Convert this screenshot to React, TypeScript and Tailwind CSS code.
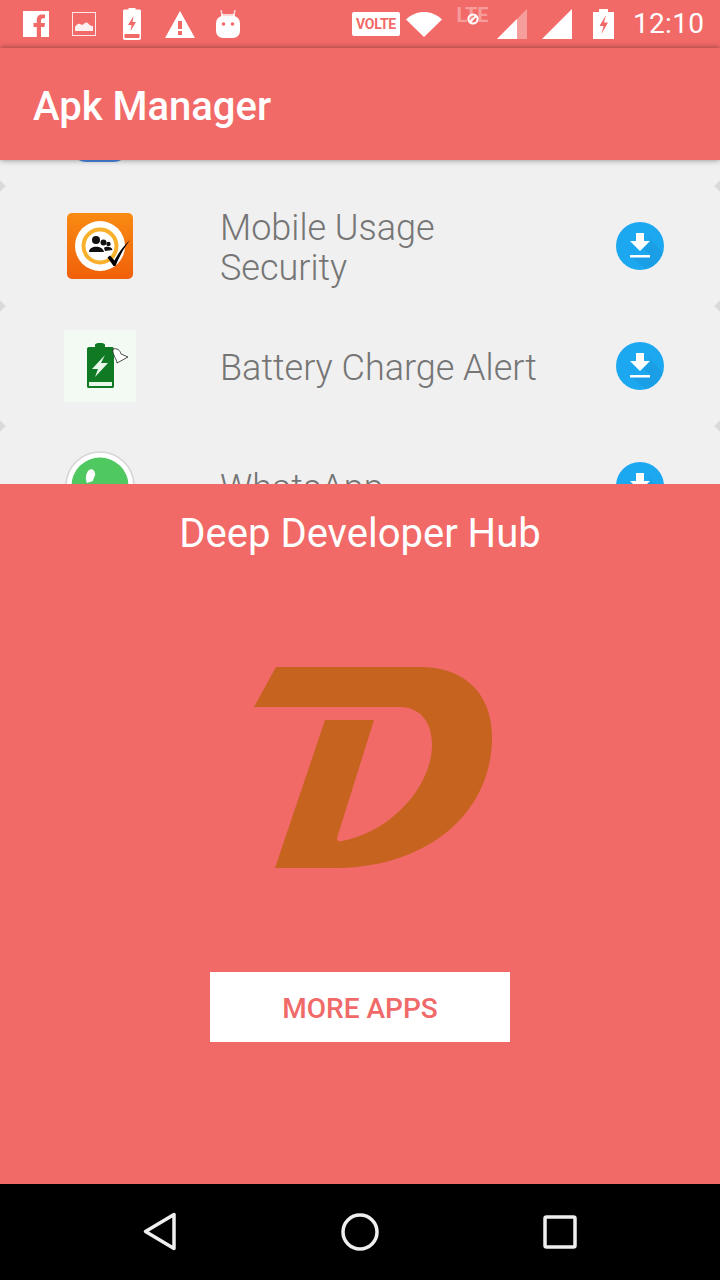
import React from 'react';

const FONT = "font-['Roboto','Liberation_Sans',sans-serif]";

function StatusBar() {
  return (
    <div className="flex h-12 shrink-0 items-center bg-[#f26a68] text-white">
      {/* facebook */}
      <svg className="ml-[23px]" width="26" height="26" viewBox="0 0 26 26">
        <path fill="#fff" d="M0 0H26V26H18V16H21.5L22 12H18V9.5C18 8 18.6 7.3 20 7.3H22V3.6C21 3.5 20 3.4 19 3.4C15.8 3.4 13.8 5.4 13.8 9V12H10.5V16H13.8V26H0Z" />
      </svg>
      {/* picture */}
      <svg className="ml-[23px]" width="24" height="24" viewBox="0 0 24 24">
        <rect x="0.5" y="0.5" width="23" height="23" fill="none" stroke="#fff" strokeOpacity="0.85" />
        <path fill="#fff" fillOpacity="0.9" d="M3 19V15C5 12 7 11 9 12.5C11 14 12 11 14 10.5C16 10 17 14 21 14V19Z" />
      </svg>
      {/* battery with bolt */}
      <svg className="ml-[27px]" width="18" height="32" viewBox="0 0 18 32">
        <path fill="#fff" d="M5.5 0H12.5V1.5H16.5C17.4 1.5 18 2.2 18 3V30C18 31.2 17.2 32 16 32H2C0.8 32 0 31.2 0 30V3C0 2.2 0.6 1.5 1.5 1.5H5.5Z" />
        <rect x="1.5" y="26" width="15" height="4" fill="#f26a68" />
        <path fill="#f26a68" d="M10.5 8L5 17H8.5L7.5 23L13 14H9.5Z" />
      </svg>
      {/* warning */}
      <svg className="ml-[24px]" width="30" height="27" viewBox="0 0 30 27">
        <path fill="#fff" d="M15 0L30 27H0Z" />
        <rect x="13" y="10" width="4" height="8" fill="#f26a68" />
        <rect x="13" y="20" width="4" height="4" fill="#f26a68" />
      </svg>
      {/* android */}
      <svg className="ml-[21px]" width="24" height="28" viewBox="0 0 24 28">
        <path stroke="#fff" strokeOpacity="0.7" strokeWidth="1.5" d="M5 0L6.5 6M19 0L17.5 6" />
        <path fill="#fff" fillOpacity="0.75" d="M5 4H19V8H5Z" />
        <rect y="6" width="24" height="22" rx="7" fill="#fff" />
        <circle cx="7.5" cy="14" r="1.8" fill="#f26a68" />
        <circle cx="16.5" cy="14" r="1.8" fill="#f26a68" />
      </svg>

      <span className="ml-[112px] flex h-6 w-12 items-center justify-center rounded-[2px] bg-white text-[14px] font-bold tracking-[-0.3px] text-[#f26a68]">
        VOLTE
      </span>
      {/* wifi */}
      <svg className="ml-[6px]" width="36" height="25" viewBox="0 0 36 25">
        <path fill="#fff" d="M0 7.5C10 -2.5 26 -2.5 36 7.5L18 25Z" />
      </svg>
      {/* lte, no data */}
      <span className="relative ml-[13px] flex h-5 w-[35px] -translate-y-[9px] items-center justify-center text-[20px] font-bold leading-none text-white/35">
        LTE
        <svg className="absolute left-[12px] top-[8px]" width="12" height="12" viewBox="0 0 12 12">
          <circle cx="6" cy="6" r="4.6" fill="none" stroke="#fff" strokeWidth="2" />
          <path stroke="#fff" strokeWidth="2" d="M3 9L9 3" />
        </svg>
      </span>
      {/* signal */}
      <svg className="ml-[7px]" width="30" height="30" viewBox="0 0 30 30">
        <path fill="#fff" fillOpacity="0.35" d="M30 0V30H0Z" />
        <path fill="#fff" d="M20 10V30H0Z" />
      </svg>
      <svg className="ml-[15px]" width="30" height="30" viewBox="0 0 30 30">
        <path fill="#fff" d="M30 0V30H0Z" />
      </svg>
      {/* battery charging */}
      <svg className="ml-[21px]" width="21" height="30" viewBox="0 0 21 30">
        <path fill="#fff" d="M6 0H15V3H21V30H0V3H6Z" />
        <path fill="#f26a68" d="M13 6L6.5 17H10.5L8.5 25L15 13.5H11Z" />
      </svg>
      <span className="ml-[19px] text-[28px] leading-none tracking-[0.3px]">12:10</span>
    </div>
  );
}

function Download() {
  return (
    <svg width="48" height="48" viewBox="0 0 48 48">
      <circle cx="24" cy="24" r="24" fill="#1ca8f0" />
      <path fill="#1a9fe6" d="M30 13L46.5 30C44 39 37 45.5 30 47L15 35.5H34V32L27 27L34 19Z" />
      <path fill="#fff" d="M20 11H28V19H34L24 29L14 19H20Z" />
      <rect x="14" y="33" width="20" height="2.5" fill="#fff" />
    </svg>
  );
}

function UsageIcon() {
  return (
    <svg width="66" height="66" viewBox="0 0 66 66">
      <defs>
        <linearGradient id="usageBg" x1="0" y1="0" x2="0" y2="1">
          <stop offset="0" stopColor="#f98a12" />
          <stop offset="1" stopColor="#f0600a" />
        </linearGradient>
      </defs>
      <rect width="66" height="66" rx="5" fill="url(#usageBg)" />
      <circle cx="33" cy="33" r="25" fill="#fff" />
      <circle cx="33" cy="33" r="16.5" fill="#fff" stroke="#f9b02c" strokeWidth="4" />
      <circle cx="29" cy="27" r="4" fill="#111" />
      <circle cx="36.5" cy="29.5" r="3" fill="#111" />
      <circle cx="41.5" cy="31" r="2.2" fill="#111" />
      <path fill="#111" d="M22 39C22 32 36 32 37 39ZM37 35C38 33 45 33 45.5 37L38 38Z" />
      <path fill="#000" d="M40.5 44.5L43 42.5L47.5 47.5C51 41 56 33 63 27C57 35 52 44 48.5 53L46.5 53Z" />
    </svg>
  );
}

function BatteryAlertIcon() {
  return (
    <svg width="72" height="72" viewBox="0 0 72 72">
      <rect width="72" height="72" fill="#f2faf3" />
      <path fill="#0f7a23" d="M31 15C31 13.5 33 13 36 13C39 13 41 13.5 41 15V17H48C49.5 17 50 18 50 19V56C50 57.5 49.5 58 48 58H25C23.5 58 23 57.5 23 56V19C23 18 23.5 17 25 17H31Z" />
      <rect x="25" y="52" width="23" height="4" fill="#e9f6ea" />
      <path fill="#e9f6ea" d="M41 25L28 39H34L31 47L44 33H37Z" />
      <path fill="#fff" stroke="#222" strokeWidth="0.8" d="M49 19C53 18 56 20 57 24L64 27L53 33C53 29 48 25 49 19Z" />
    </svg>
  );
}

function WhatsAppIcon() {
  return (
    <svg width="70" height="72" viewBox="0 0 70 72">
      <circle cx="35" cy="36" r="34" fill="#fff" stroke="#d4d4d4" strokeWidth="1.5" />
      <circle cx="35" cy="36" r="28.5" fill="#4fc85f" />
      <path fill="#fff" d="M23 21C26 18 29 19 30 23C31 26 28 28 28 31L22 33C20 29 21 24 23 21Z" />
    </svg>
  );
}

type RowData = { name: React.ReactNode; icon: React.ReactNode };

const rows: RowData[] = [
  {
    name: '',
    icon: <div className="h-[72px] w-[56px] rounded-[14px] bg-[#4a8ae8]" />,
  },
  {
    name: (
      <>
        Mobile Usage
        <br />
        Security
      </>
    ),
    icon: <UsageIcon />,
  },
  { name: 'Battery Charge Alert', icon: <BatteryAlertIcon /> },
  { name: 'WhatsApp', icon: <WhatsAppIcon /> },
];

function AppRow({ row }: { row: RowData }) {
  return (
    <div className="relative flex h-[120px] shrink-0 items-center">
      <div className="flex w-[200px] shrink-0 justify-center">{row.icon}</div>
      <div className="ml-5 flex-1 pt-1 text-[36px] font-light leading-[40px] text-[#757575]">{row.name}</div>
      <div className="mr-14">
        <Download />
      </div>
      {/* small notch on both ends of the divider */}
      <span className="absolute -left-[4px] -bottom-[4px] h-2 w-2 rotate-45 bg-[#d9d9d9]" />
      <span className="absolute -right-[4px] -bottom-[4px] h-2 w-2 rotate-45 bg-[#d9d9d9]" />
    </div>
  );
}

function DeepLogo() {
  return (
    <svg width="264" height="202" viewBox="228 667 264 202">
      <path
        fill="#c5631f"
        d="M276 667L420 667C466 667 492 695 492 737C492 815 425 868 335 868L275 868L325 720L374 720L337 838C337 841 339 842 342 841C392 832 432 785 432 745C432 722 420 707 400 707L254 707Z"
      />
    </svg>
  );
}

function NavBar() {
  return (
    <div className="flex h-24 shrink-0 items-center justify-center bg-black">
      <svg width="36" height="40" viewBox="0 0 36 40" className="mr-[162px]">
        <path fill="none" stroke="#efefef" strokeWidth="3.5" strokeLinejoin="round" d="M31 2.5V36.5L2.5 19.5Z" />
      </svg>
      <svg width="38" height="38" viewBox="0 0 38 38">
        <circle cx="19" cy="19" r="17" fill="none" stroke="#efefef" strokeWidth="3.5" />
      </svg>
      <svg width="34" height="34" viewBox="0 0 34 34" className="ml-[164px]">
        <rect x="2" y="2" width="30" height="30" rx="1.5" fill="none" stroke="#efefef" strokeWidth="3.5" />
      </svg>
    </div>
  );
}

export default function App() {
  return (
    <div className={`flex h-[1280px] w-[720px] flex-col overflow-hidden bg-[#f0f0f0] ${FONT}`}>
      <StatusBar />

      <div className="relative z-10 flex h-28 shrink-0 items-center bg-[#f26a68] pl-[33px] pt-[6px] shadow-[0_0_6px_rgba(0,0,0,0.45)]">
        <span className="text-[40px] font-medium leading-none text-white">Apk Manager</span>
      </div>

      {/* list is scrolled, first row only just shows under the app bar */}
      <div className="h-[324px] shrink-0 overflow-hidden">
        <div className="-mt-[94px] flex flex-col">
          {rows.map((row, i) => (
            <AppRow key={i} row={row} />
          ))}
        </div>
      </div>

      <div className="flex flex-1 flex-col items-center bg-[#f26a68]">
        <h2 className="mt-[25px] text-[40px] font-normal leading-[50px] text-white">Deep Developer Hub</h2>
        <div className="mt-[108px]">
          <DeepLogo />
        </div>
        <button className="mt-[103px] h-[70px] w-[300px] bg-white pt-1 text-[28px] font-medium text-[#ef6a68]">
          MORE APPS
        </button>
      </div>

      <NavBar />
    </div>
  );
}
